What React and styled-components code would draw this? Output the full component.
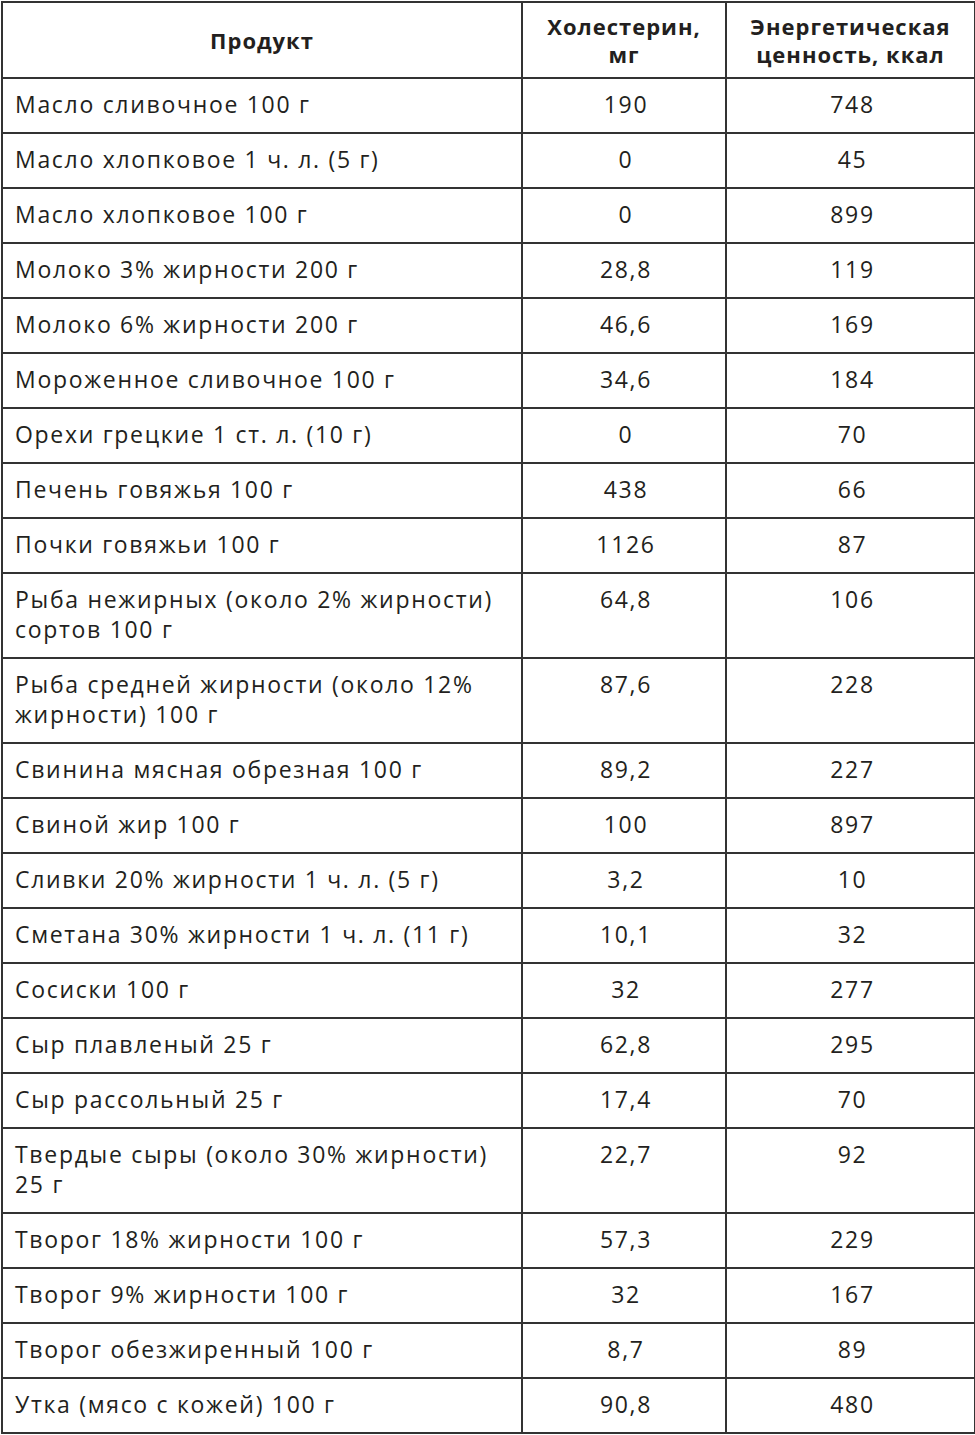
import React from "react";
import styled, { createGlobalStyle } from "styled-components";

const GlobalStyle = createGlobalStyle`
  body {
    margin: 0;
    background: #fff;
    font-family: "Open Sans", "Noto Sans", sans-serif;
    color: #231f20;
  }
`;

const Wrap = styled.div`
  padding: 1px 1px 0 1px;
`;

const Table = styled.table`
  width: 973px;
  border-collapse: collapse;
  table-layout: fixed;
  border: 2px solid #333;
`;

const HeadCell = styled.th`
  border: 2px solid #333;
  height: 74px;
  padding: 0 4px;
  font-weight: 700;
  font-size: 22px;
  letter-spacing: 1px;
  line-height: 28px;
  text-align: center;
  vertical-align: middle;
  color: #231f20;
`;

const Cell = styled.td`
  border: 2px solid #333;
  padding: 10px 8px 13px 12px;
  font-size: 23px;
  letter-spacing: 1.7px;
  line-height: 30px;
  vertical-align: top;
  white-space: nowrap;
  text-align: ${(p) => (p.$center ? "center" : "left")};
  color: #231f20;
`;

const rows = [
  [["Масло сливочное 100 г"], "190", "748"],
  [["Масло хлопковое 1 ч. л. (5 г)"], "0", "45"],
  [["Масло хлопковое 100 г"], "0", "899"],
  [["Молоко 3% жирности 200 г"], "28,8", "119"],
  [["Молоко 6% жирности 200 г"], "46,6", "169"],
  [["Мороженное сливочное 100 г"], "34,6", "184"],
  [["Орехи грецкие 1 ст. л. (10 г)"], "0", "70"],
  [["Печень говяжья 100 г"], "438", "66"],
  [["Почки говяжьи 100 г"], "1126", "87"],
  [["Рыба нежирных (около 2% жирности)", "сортов 100 г"], "64,8", "106"],
  [["Рыба средней жирности (около 12%", "жирности) 100 г"], "87,6", "228"],
  [["Свинина мясная обрезная 100 г"], "89,2", "227"],
  [["Свиной жир 100 г"], "100", "897"],
  [["Сливки 20% жирности 1 ч. л. (5 г)"], "3,2", "10"],
  [["Сметана 30% жирности 1 ч. л. (11 г)"], "10,1", "32"],
  [["Сосиски 100 г"], "32", "277"],
  [["Сыр плавленый 25 г"], "62,8", "295"],
  [["Сыр рассольный 25 г"], "17,4", "70"],
  [["Твердые сыры (около 30% жирности)", "25 г"], "22,7", "92"],
  [["Творог 18% жирности 100 г"], "57,3", "229"],
  [["Творог 9% жирности 100 г"], "32", "167"],
  [["Творог обезжиренный 100 г"], "8,7", "89"],
  [["Утка (мясо с кожей) 100 г"], "90,8", "480"],
];

export default function App() {
  return (
    <Wrap>
      <GlobalStyle />
      <Table>
        <colgroup>
          <col style={{ width: 520 }} />
          <col style={{ width: 204 }} />
          <col style={{ width: 249 }} />
        </colgroup>
        <thead>
          <tr>
            <HeadCell>Продукт</HeadCell>
            <HeadCell>
              Холестерин,
              <br />
              мг
            </HeadCell>
            <HeadCell>
              Энергетическая
              <br />
              ценность, ккал
            </HeadCell>
          </tr>
        </thead>
        <tbody>
          {rows.map(([lines, chol, kcal]) => (
            <tr key={lines.join(" ")}>
              <Cell>
                {lines.map((line, i) => (
                  <React.Fragment key={i}>
                    {i > 0 && <br />}
                    {line}
                  </React.Fragment>
                ))}
              </Cell>
              <Cell $center>{chol}</Cell>
              <Cell $center>{kcal}</Cell>
            </tr>
          ))}
        </tbody>
      </Table>
    </Wrap>
  );
}
